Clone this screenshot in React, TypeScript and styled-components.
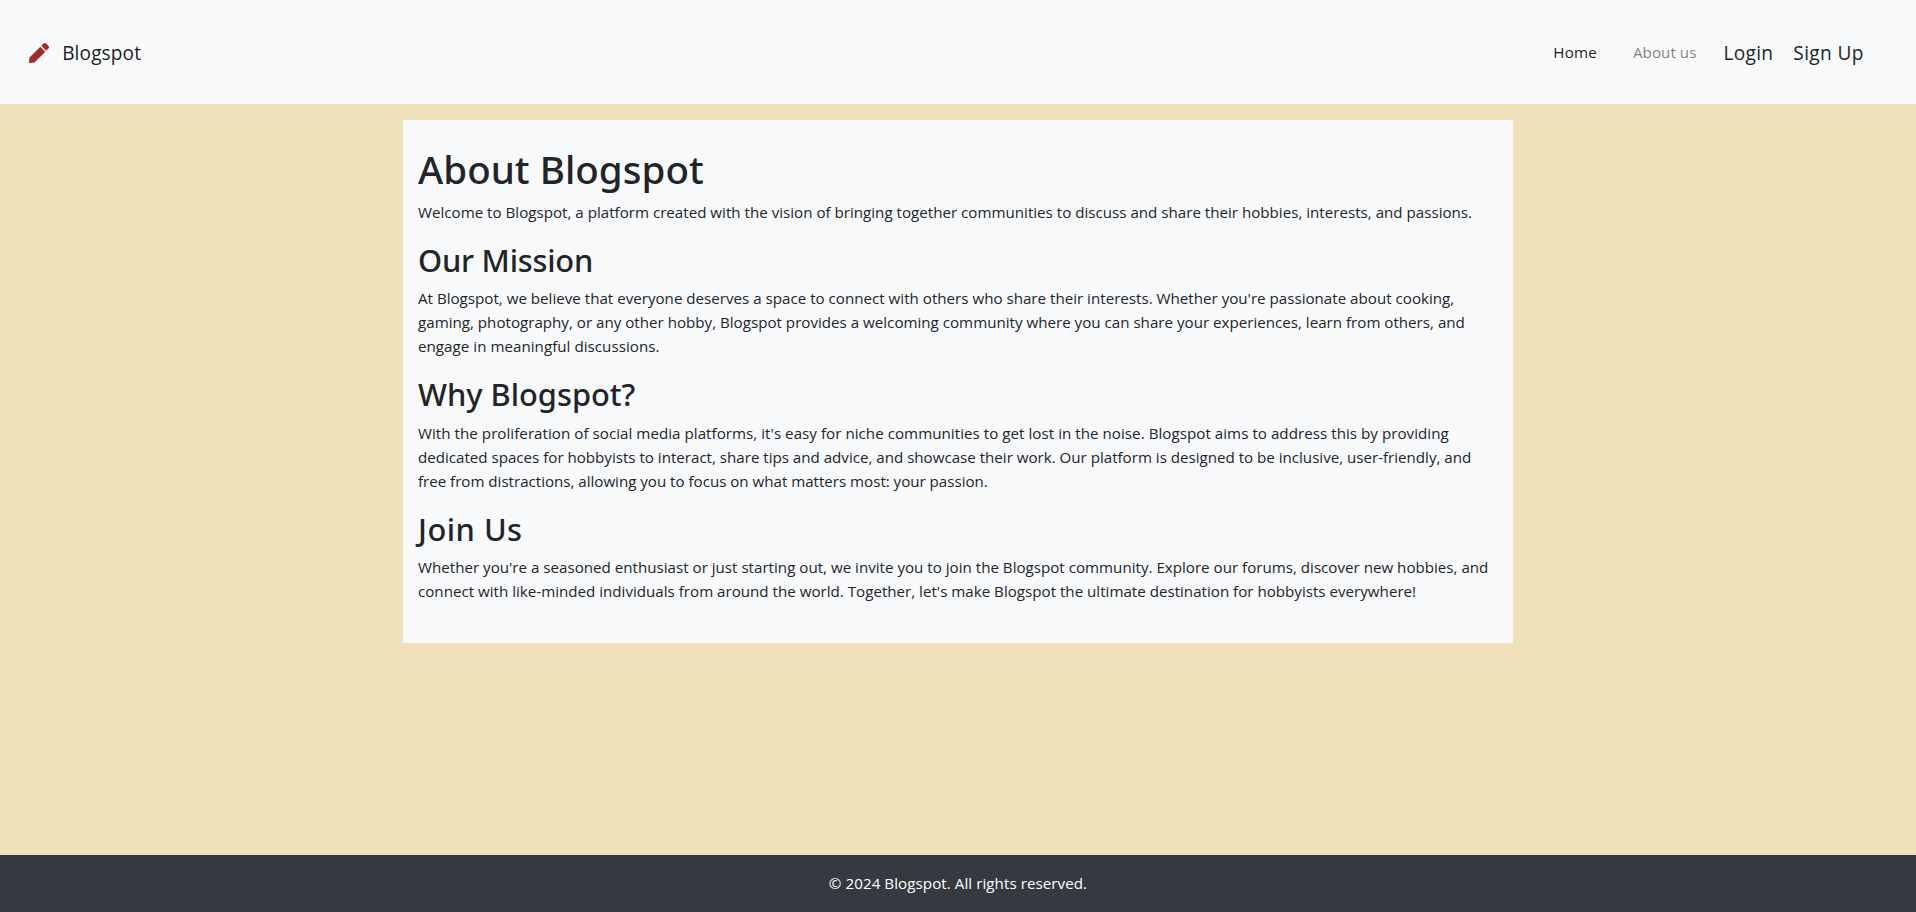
import React from 'react';
import styled, { createGlobalStyle } from 'styled-components';
import { FaPen } from 'react-icons/fa';

const GlobalStyle = createGlobalStyle`
  *, *::before, *::after { box-sizing: border-box; }
  body {
    margin: 0;
    background: #f1e1ba;
    color: #212529;
    font: 400 15.15px/24px "Open Sans", "Noto Sans", sans-serif;
  }
`;

const Page = styled.div`
  display: flex;
  flex-direction: column;
  min-height: 100vh;
`;

const Navbar = styled.nav`
  display: flex;
  align-items: center;
  justify-content: space-between;
  height: 104px;
  padding: 0 52.3px 0 29px;
  background: #f8f9fb;
`;

const Brand = styled.a`
  display: flex;
  align-items: center;
  color: rgba(0, 0, 0, 0.9);
  text-decoration: none;
`;

const BrandIcon = styled(FaPen)`
  width: 20px;
  height: 20px;
  margin: 1px 13.2px 0 0;
  color: #a52a2a;
`;

const LargeText = styled.span<{ $tracking: number }>`
  padding-top: 2px;
  font-size: 19.1px;
  line-height: 30px;
  letter-spacing: ${(p) => p.$tracking}px;
`;

const NavLinks = styled.div`
  display: flex;
  align-items: center;
`;

const NavLink = styled.a<{ $muted?: boolean; $gap: number; $tracking: number }>`
  margin-right: ${(p) => p.$gap}px;
  color: ${(p) => (p.$muted ? 'rgba(0, 0, 0, 0.5)' : 'rgba(0, 0, 0, 0.9)')};
  letter-spacing: ${(p) => p.$tracking}px;
  text-decoration: none;
`;

const AccountLinks = styled.div`
  display: flex;
  gap: 20.1px;
`;

const Main = styled.main`
  flex: 1;
  padding-top: 16px;
`;

const Card = styled.article`
  width: 1110px;
  margin: 0 auto;
  padding: 24px 15px;
  background: #f8f9fb;
`;

const Title = styled.h1`
  margin: 0 0 7px;
  padding-top: 1px;
  font: 500 38.5px/48px "Noto Sans", "Open Sans", sans-serif;
  letter-spacing: 0.03px;
`;

const Heading = styled.h2<{ $tracking: number }>`
  margin: 0 0 7.2px;
  padding-top: 0.8px;
  font: 500 30.8px/38.4px "Noto Sans", "Open Sans", sans-serif;
  letter-spacing: ${(p) => p.$tracking}px;
`;

const Paragraph = styled.p`
  margin: 0 0 16px;
`;

const Line = styled.span<{ $tracking: number }>`
  display: block;
  white-space: nowrap;
  letter-spacing: ${(p) => p.$tracking}px;
`;

const Footer = styled.footer`
  height: 57px;
  padding: 16px 0;
  background: #343a40;
  color: #fff;
  text-align: center;
  letter-spacing: 0.06px;
`;

type TextLine = [text: string, tracking: number];

interface Section {
  heading: string;
  tracking: number;
  lines: TextLine[];
}

const intro: TextLine[] = [
  ['Welcome to Blogspot, a platform created with the vision of bringing together communities to discuss and share their hobbies, interests, and passions.', 0],
];

const sections: Section[] = [
  {
    heading: 'Our Mission',
    tracking: -0.22,
    lines: [
      ["At Blogspot, we believe that everyone deserves a space to connect with others who share their interests. Whether you're passionate about cooking,", 0],
      ['gaming, photography, or any other hobby, Blogspot provides a welcoming community where you can share your experiences, learn from others, and', 0],
      ['engage in meaningful discussions.', 0.03],
    ],
  },
  {
    heading: 'Why Blogspot?',
    tracking: 0,
    lines: [
      ["With the proliferation of social media platforms, it's easy for niche communities to get lost in the noise. Blogspot aims to address this by providing", 0.035],
      ['dedicated spaces for hobbyists to interact, share tips and advice, and showcase their work. Our platform is designed to be inclusive, user-friendly, and', -0.012],
      ['free from distractions, allowing you to focus on what matters most: your passion.', -0.02],
    ],
  },
  {
    heading: 'Join Us',
    tracking: 0.5,
    lines: [
      ["Whether you're a seasoned enthusiast or just starting out, we invite you to join the Blogspot community. Explore our forums, discover new hobbies, and", 0],
      ["connect with like-minded individuals from around the world. Together, let's make Blogspot the ultimate destination for hobbyists everywhere!", 0],
    ],
  },
];

const TextBlock = ({ lines }: { lines: TextLine[] }) => (
  <Paragraph>
    {lines.map(([text, tracking]) => (
      <Line key={text} $tracking={tracking}>
        {text}
      </Line>
    ))}
  </Paragraph>
);

export default function App() {
  return (
    <Page>
      <GlobalStyle />
      <Navbar>
        <Brand>
          <BrandIcon />
          <LargeText $tracking={0.1}>Blogspot</LargeText>
        </Brand>
        <NavLinks>
          <NavLink $gap={36} $tracking={0.2}>Home</NavLink>
          <NavLink $muted $gap={27.2} $tracking={0.05}>About us</NavLink>
          <AccountLinks>
            <LargeText $tracking={0.25}>Login</LargeText>
            <LargeText $tracking={0.35}>Sign Up</LargeText>
          </AccountLinks>
        </NavLinks>
      </Navbar>
      <Main>
        <Card>
          <Title>About Blogspot</Title>
          <TextBlock lines={intro} />
          {sections.map((section) => (
            <React.Fragment key={section.heading}>
              <Heading $tracking={section.tracking}>{section.heading}</Heading>
              <TextBlock lines={section.lines} />
            </React.Fragment>
          ))}
        </Card>
      </Main>
      <Footer>© 2024 Blogspot. All rights reserved.</Footer>
    </Page>
  );
}
